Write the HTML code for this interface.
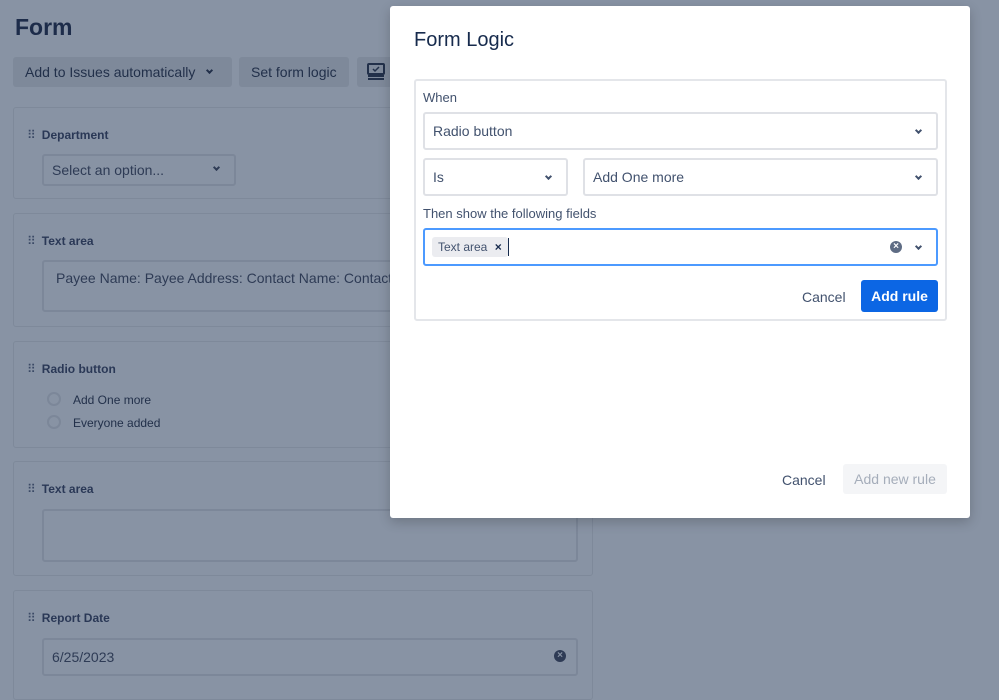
<!DOCTYPE html>
<html><head><style>
*{box-sizing:border-box;margin:0;padding:0}
body{width:999px;height:687px;overflow:hidden;background:#8893a4;font-family:"Liberation Sans",sans-serif;position:relative;color:#22304a}
.a{position:absolute}
.btn{position:absolute;top:57px;height:30px;background:#7e899a;border-radius:3px;font-size:14px;line-height:30px;padding:0 12px;color:#22304a}
.card{position:absolute;left:13px;width:580px;border:1px solid #7e899a;border-radius:3px;background:#8893a4}
.lbl{position:absolute;left:13px;font-size:12px;font-weight:bold;color:#2a3856}
.lbl:before{content:"⠿";font-weight:normal;margin-right:6px;color:#3b4a66}
.inp{position:absolute;border:2px solid #7c8799;border-radius:3px;font-size:14px;color:#2e3b55;padding-left:8px}
.m{position:absolute;left:390px;top:6px;width:580px;height:512px;background:#fff;border-radius:3px;box-shadow:0 4px 12px rgba(0,0,0,.2)}
.sel{position:absolute;border:2px solid #dfe1e6;border-radius:3px;font-size:14px;color:#42526e;padding-left:8px;line-height:34px;height:38px}
.chev{position:absolute;right:15px;top:14px;width:5px;height:5px;border-right:2px solid #42526e;border-bottom:2px solid #42526e;transform:rotate(45deg)}
.clr{position:absolute;width:12px;height:12px;border-radius:50%;background:#42526e;color:#fff;font-size:10px;line-height:12px;text-align:center;font-weight:bold}
</style></head><body>
<div class="a" style="left:15px;top:14px;font-size:23px;font-weight:bold;color:#1d2c4a">Form</div>
<div class="btn" style="left:13px;width:219px">Add to Issues automatically<div class="chev" style="right:20px;top:11px;border-color:#22304a"></div></div>
<div class="btn" style="left:239px;width:110px">Set form logic</div>
<div class="btn" style="left:357px;width:40px"><svg style="position:absolute;left:10px;top:6px" width="18" height="18" viewBox="0 0 18 18"><rect x="1" y="1" width="16" height="10" rx="1" fill="none" stroke="#22304a" stroke-width="2"/><path d="M6 6l2 2 4-4" fill="none" stroke="#22304a" stroke-width="1.5"/><path d="M1 13h16M1 16h16" stroke="#22304a" stroke-width="2"/></svg></div>

<div class="card" style="top:107px;height:92px">
<div class="lbl" style="top:20px">Department</div>
<div class="inp" style="left:28px;top:46px;width:194px;height:32px;line-height:28px">Select an option...<div class="chev" style="top:9px;border-color:#2e3b55"></div></div>
</div>
<div class="card" style="top:213px;height:114px">
<div class="lbl" style="top:20px">Text area</div>
<div class="inp" style="left:28px;top:46px;width:536px;height:52px;padding:8px 12px">Payee Name: Payee Address: Contact Name: Contact ID</div>
</div>
<div class="card" style="top:341px;height:107px">
<div class="lbl" style="top:20px">Radio button</div>
<div class="a" style="left:33px;top:50px;width:14px;height:14px;border:2px solid #7c8799;border-radius:50%"></div>
<div class="a" style="left:59px;top:51px;font-size:12px;color:#22304a">Add One more</div>
<div class="a" style="left:33px;top:73px;width:14px;height:14px;border:2px solid #7c8799;border-radius:50%"></div>
<div class="a" style="left:59px;top:74px;font-size:12px;color:#22304a">Everyone added</div>
</div>
<div class="card" style="top:461px;height:115px">
<div class="lbl" style="top:20px">Text area</div>
<div class="inp" style="left:28px;top:47px;width:536px;height:53px"></div>
</div>
<div class="card" style="top:590px;height:110px">
<div class="lbl" style="top:20px">Report Date</div>
<div class="inp" style="left:28px;top:47px;width:536px;height:38px;line-height:34px">6/25/2023</div>
<div class="clr" style="left:540px;top:59px;background:#2e3b55;color:#8893a4">×</div>
</div>

<div class="m">
<div class="a" style="left:24px;top:23px;font-size:20px;color:#172b4d">Form Logic</div>
<div class="a" style="left:24px;top:73px;width:533px;height:242px;border:2px solid #e4e6ea;border-radius:3px">
<div class="a" style="left:7px;top:9px;font-size:13px;color:#42526e">When</div>
<div class="sel" style="left:7px;top:31px;width:515px">Radio button<div class="chev"></div></div>
<div class="sel" style="left:7px;top:77px;width:145px">Is<div class="chev"></div></div>
<div class="sel" style="left:167px;top:77px;width:355px">Add One more<div class="chev"></div></div>
<div class="a" style="left:7px;top:125px;font-size:13px;color:#42526e">Then show the following fields</div>
<div class="sel" style="left:7px;top:147px;width:515px;border-color:#4c9aff">
<span style="position:absolute;left:7px;top:7px;height:20px;line-height:20px;background:#ebecf0;border-radius:3px;padding:0 6px;font-size:12px;color:#42526e">Text area <b style="margin-left:4px;color:#172b4d">×</b></span>
<span style="position:absolute;left:83px;top:8px;width:1px;height:18px;background:#172b4d"></span>
<span class="clr" style="right:34px;top:11px;left:auto;background:#5e6c84">×</span>
<div class="chev"></div></div>
<div class="a" style="left:386px;top:208px;font-size:14px;color:#42526e">Cancel</div>
<div class="a" style="left:445px;top:199px;width:77px;height:32px;background:#0c66e4;border-radius:3px;color:#fff;font-size:14px;font-weight:bold;line-height:32px;text-align:center">Add rule</div>
</div>
<div class="a" style="left:392px;top:466px;font-size:14px;color:#42526e">Cancel</div>
<div class="a" style="left:453px;top:458px;width:104px;height:30px;background:#f4f5f7;border-radius:3px;color:#a5adba;font-size:14px;line-height:30px;text-align:center">Add new rule</div>
</div>
</body></html>
